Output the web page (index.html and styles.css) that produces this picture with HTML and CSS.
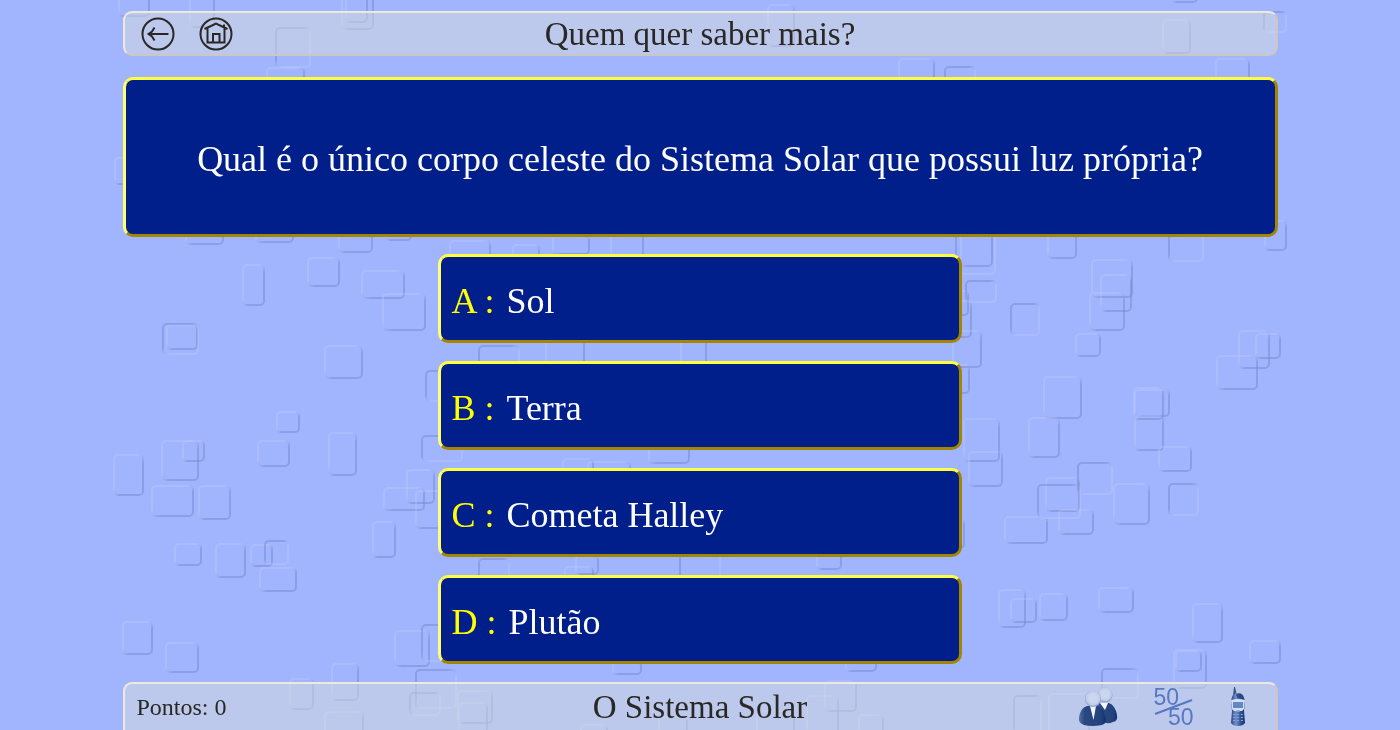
FILE: index.html
```html
<!DOCTYPE html>
<html lang="pt">
<head>
<meta charset="utf-8">
<meta name="viewport" content="width=device-width, initial-scale=1">
<title>Quem quer saber mais?</title>
<link rel="stylesheet" href="styles.css">
</head>
<body>
<svg class="backdrop" viewBox="0 0 1400 730" preserveAspectRatio="xMidYMin slice" aria-hidden="true">
  <defs>
    <linearGradient id="raised" x1="0" y1="0" x2="1" y2="1">
      <stop offset="0.4" stop-color="#c3ccfb" stop-opacity=".3"/>
      <stop offset="0.6" stop-color="#7383c6" stop-opacity=".45"/>
    </linearGradient>
    <linearGradient id="sunken" x1="0" y1="0" x2="1" y2="1">
      <stop offset="0.4" stop-color="#7383c6" stop-opacity=".45"/>
      <stop offset="0.6" stop-color="#c3ccfb" stop-opacity=".3"/>
    </linearGradient>
  </defs>
  <g id="tiles" transform="translate(1 1)"></g>
</svg>
<div class="game">
  <header class="panel header">
    <nav class="header-nav">
      <a class="icon-link" href="#voltar" aria-label="Voltar">
        <svg viewBox="0 0 34 34" class="line-icon"><circle cx="17" cy="17" r="15.5"/><path d="M27.500 17H7.500M13.500 10.500L11 14.500L7.500 17L11 19.500L13.500 23.500"/></svg>
      </a>
      <a class="icon-link" href="#inicio" aria-label="Início">
        <svg viewBox="0 0 34 34" class="line-icon"><circle cx="17" cy="17" r="15.500"/><path d="M5.500 12L17 6.500L28.500 12M25 10V7.500M8.500 11V25.500H25.500V11M14 25.500V17H20.500V25.500"/></svg>
      </a>
    </nav>
    <h1 class="title">Quem quer saber mais?</h1>
  </header>
  <main class="board">
    <h2 class="question">Qual é o único corpo celeste do Sistema Solar que possui luz própria?</h2>
    <div class="answers">
      <button class="answer" type="button"><span class="letter">A :</span><span>Sol</span></button>
      <button class="answer" type="button"><span class="letter">B :</span><span>Terra</span></button>
      <button class="answer" type="button"><span class="letter">C :</span><span>Cometa Halley</span></button>
      <button class="answer" type="button"><span class="letter">D :</span><span>Plutão</span></button>
    </div>
  </main>
  <footer class="panel footer">
    <p class="points">Pontos: 0</p>
    <p class="title">O Sistema Solar</p>
    <div class="helps">
      <button class="help" type="button" aria-label="Ajuda do público">
        <svg width="40" height="40" viewBox="0 0 40 40">
          <defs>
            <radialGradient id="head" cx=".5" cy=".45"><stop offset=".5" stop-color="#ccd6ef"/><stop offset=".85" stop-color="#bfcbea"/><stop offset="1" stop-color="#91a3cf"/></radialGradient>
            <linearGradient id="suit"><stop offset="0" stop-color="#56719f"/><stop offset=".2" stop-color="#294981"/><stop offset=".8" stop-color="#24437e"/><stop offset="1" stop-color="#152f69"/></linearGradient>
          </defs>
          <path fill="url(#suit)" d="M18 17Q20 15 24 16L31 16Q37 18 39 28Q40 34 35 35Q29 38 24 34Z"/>
          <path fill="#f5f8ff" d="M22 16H30L27 23Z"/>
          <circle cx="27" cy="8" r="7.500" fill="url(#head)"/>
          <path fill="url(#suit)" d="M9 19Q2 21 1 31Q0 36 6 38Q14 40 24 38Q30 36 27 29Q25 20 20 19Z"/>
          <path fill="#f5f8ff" d="M12 19H18L15.500 33Z"/>
          <circle cx="15" cy="12" r="8" fill="url(#head)"/>
        </svg>
      </button>
      <button class="help fifty" type="button" aria-label="50/50">
        <span class="fifty-top">50</span><span class="fifty-bottom">50</span>
        <svg class="fifty-line" viewBox="0 0 40 16" aria-hidden="true"><path d="M1 15L38 1"/></svg>
      </button>
      <button class="help" type="button" aria-label="Telefonar">
        <svg width="16" height="40" viewBox="0 0 16 40">
          <defs><linearGradient id="case"><stop offset="0" stop-color="#27427c"/><stop offset=".35" stop-color="#7291ca"/><stop offset=".65" stop-color="#365a9e"/><stop offset="1" stop-color="#152d62"/></linearGradient></defs>
          <path fill="#335589" d="M4 0H5L7 9H3Z"/>
          <path fill="url(#case)" d="M2 10Q3 6 8 6Q13 6 14 11L15 14L14 24L15 36Q13 39 8 39Q3 39 1 36L2 24L1 14Z"/>
          <path fill="#d3dff2" d="M1 13Q8 11 15 13L14 22L12 24H4L2 22Z"/>
          <rect x="3" y="15" width="10" height="6" fill="#6485c6"/>
          <path stroke="#162d60" d="M6 8H11M7 10H11"/>
          <g fill="#8ba5d8"><ellipse cx="8" cy="24" rx="2" ry="1"/><path d="M3 27h2v1h-2zM7 27h2v1h-2zM11 27h2v1h-2zM3 30h2v1h-2zM7 30h2v1h-2zM11 30h2v1h-2zM3 33h2v1h-2zM7 33h2v1h-2zM11 33h2v1h-2z"/></g>
        </svg>
      </button>
    </div>
  </footer>
</div>
<script src="tiles.js"></script>
</body>
</html>
```
FILE: styles.css
```css
* { box-sizing: border-box; }

body {
  margin: 0;
  background: #a1b5ff;
  color: #292824;
  font-family: Georgia, "Liberation Serif", serif;
}

h1, h2, p { margin: 0; font-weight: normal; }

.backdrop {
  position: fixed;
  inset: 0;
  z-index: -1;
  width: 100%;
  height: 100%;
}

.tile { fill: none; stroke-width: 2; }
.tile-raised { stroke: url(#raised); }
.tile-sunken { stroke: url(#sunken); }

.game {
  display: flex;
  flex-direction: column;
  width: 82.5%;
  min-height: 100vh;
  margin: 0 auto;
  padding-top: 11px;
}

.panel {
  display: grid;
  grid-template-columns: 1fr auto 1fr;
  align-items: center;
  border: 2px solid;
  border-color: #efe8dd #ccc8c0 #ccc8c0 #efe8dd;
  border-radius: 9px;
  background: rgba(217, 221, 217, 0.5);
}

.header { min-height: 45px; padding: 0 16px; }

.header-nav { display: flex; gap: 24px; }

.icon-link { display: block; height: 34px; color: inherit; }

.line-icon {
  width: 34px;
  height: 34px;
  fill: none;
  stroke: #292824;
  stroke-width: 2;
}

.title { font-size: 33px; line-height: 40px; }

.board {
  display: flex;
  flex: 1;
  flex-direction: column;
  align-items: center;
  gap: 17px;
  padding: 21px 0 18px;
}

.question, .answer {
  border: 3px solid;
  border-color: #ffff40 #a48500 #a48500 #ffff70;
  border-radius: 10px;
  background: #001f8b;
  color: #fff;
}

.question {
  display: flex;
  align-items: center;
  justify-content: center;
  width: 100%;
  min-height: 160px;
  padding: 20px 16px 16px;
  font-size: 36px;
  line-height: 44px;
  text-align: center;
}

.answers {
  display: grid;
  gap: 18px;
  width: 45.3%;
}

.answer {
  display: flex;
  align-items: center;
  gap: 12px;
  min-height: 89px;
  padding: 12px 10px 8px;
  font-family: inherit;
  font-size: 36px;
  line-height: 44px;
  text-align: left;
  cursor: pointer;
}

.letter { color: #ff0; }

.footer {
  min-height: 48px;
  padding: 0 12px;
  border-bottom: 0;
  border-radius: 9px 9px 0 0;
}

.points { font-size: 24px; line-height: 32px; }

.helps {
  display: flex;
  align-items: center;
  justify-content: flex-end;
  gap: 36px;
  padding-right: 18px;
}

.help {
  height: 40px;
  padding: 0;
  border: 0;
  background: none;
  cursor: pointer;
}

.fifty {
  position: relative;
  display: flex;
  flex-direction: column;
  align-items: flex-start;
  width: 40px;
  color: #5878c3;
  font-family: "Liberation Sans", Arial, sans-serif;
  font-size: 23px;
  line-height: 20px;
}

.fifty-bottom { align-self: flex-end; }

.fifty-line {
  position: absolute;
  inset: 12px 0 auto;
  width: 40px;
  height: 16px;
  stroke: #5878c3;
  stroke-width: 2;
}
```
FILE: tiles.js
```js
// Embossed background tiles: x, y, width, height.
const raised = [
  [118,-10,30,25],[189,-10,24,36],[341,-10,31,38],[345,-10,21,31],[266,67,37,20],
  [767,4,26,41],[1162,19,27,33],[1171,-20,25,21],[898,58,35,30],[1215,58,33,30],[114,157,20,26],
  [185,220,37,23],[255,222,37,19],[338,225,33,26],[385,225,25,14],
  [242,264,21,40],[307,257,31,28],[361,270,42,27],[382,293,42,36],[166,324,30,24],
  [324,345,37,32],[276,411,22,20],[161,440,36,39],[182,440,21,20],[257,440,31,25],
  [328,432,27,42],[113,454,29,40],[406,469,27,33],[151,485,41,30],[198,485,31,33],
  [174,543,26,21],[215,543,29,33],[250,544,21,21],[259,567,36,23],[383,487,40,22],
  [415,490,30,37],[372,521,22,35],[122,621,29,32],[165,642,32,29],[394,630,34,35],
  [331,663,26,36],[289,678,23,30],[324,711,38,30],
  [960,225,31,40],[1047,225,28,32],[1264,220,21,29],[1091,259,40,37],[1100,274,30,36],
  [1089,292,34,37],[1075,333,24,22],[950,290,17,24],[955,300,15,36],[952,330,28,36],
  [950,364,18,28],[1043,376,37,41],[1028,417,30,39],[963,418,35,42],[968,451,33,34],
  [1133,387,29,31],[1134,389,34,26],[1134,415,28,34],[1158,446,32,24],[1238,330,30,37],
  [1255,333,24,24],[1216,355,40,33],[1045,477,33,33],[1113,483,35,40],[1004,516,42,26],
  [1058,509,34,24],[950,518,13,29],[998,589,26,37],[1010,598,25,23],[1039,593,27,26],
  [1098,587,34,24],[1192,603,29,38],[1173,649,32,38],[1175,650,25,20],[1249,640,30,22],
  [1048,693,40,50],[449,240,40,30],[512,244,26,30],[552,235,36,18],[610,225,32,40],
  [545,335,38,50],[680,335,25,50],[648,440,40,22],[562,458,30,20],[587,461,42,30],
  [564,566,28,20],[575,555,22,18],[816,550,24,18],[612,660,28,13],[845,660,30,10],
  [824,680,31,30],[806,695,31,40],[858,714,24,20],[457,690,34,32],[458,702,28,30],
  [580,724,26,20],[658,716,28,20],[756,710,37,30]
];
const sunken = [
  [275,27,34,39],[1263,11,22,20],[944,66,30,20],[162,323,35,30],[425,370,40,30],
  [421,435,40,25],[264,540,23,23],[421,624,30,36],[415,669,40,38],[409,692,30,22],
  [955,225,39,48],[1168,225,34,35],[965,280,30,21],[1010,303,28,31],[1077,462,34,31],
  [1037,484,42,33],[1168,483,29,31],[1101,668,36,29],[1013,695,27,40],[478,345,40,30],
  [478,558,30,30],[679,550,40,40]
];

const layer = document.getElementById("tiles");

function addTiles(list, kind) {
  for (const [x, y, width, height] of list) {
    const tile = document.createElementNS("http://www.w3.org/2000/svg", "rect");
    const box = { x, y, width, height, rx: 4, class: "tile tile-" + kind };
    for (const name in box) tile.setAttribute(name, box[name]);
    layer.append(tile);
  }
}

addTiles(raised, "raised");
addTiles(sunken, "sunken");
```
